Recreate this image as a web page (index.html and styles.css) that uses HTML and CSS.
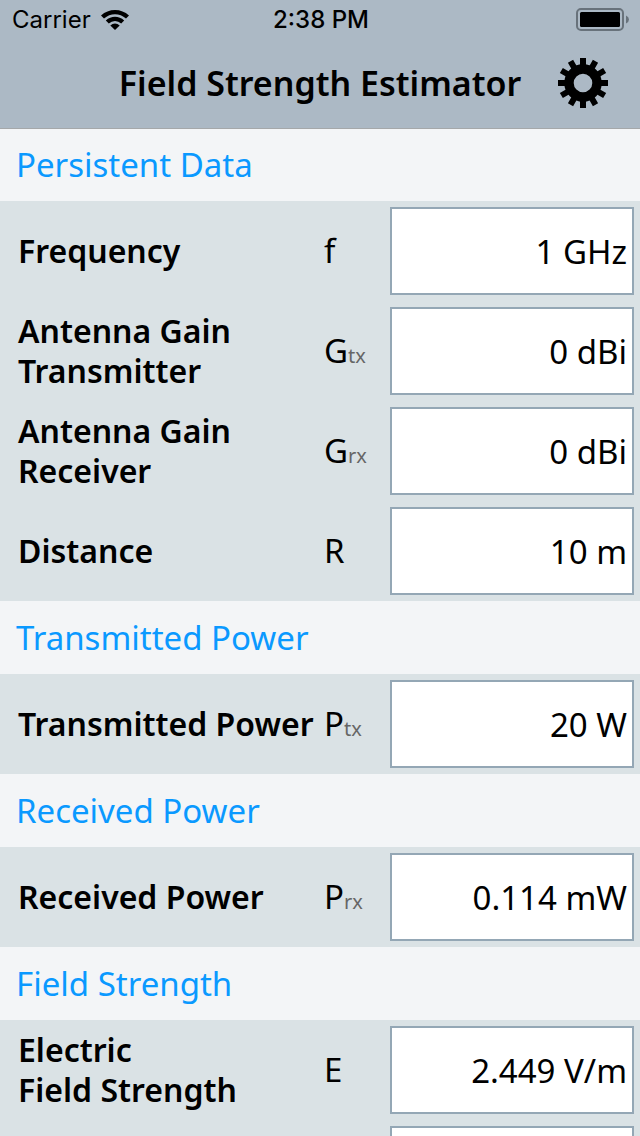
FILE: index.html
```html
<!DOCTYPE html>
<html lang="en">
<head>
<meta charset="utf-8">
<meta name="viewport" content="width=device-width, initial-scale=1">
<title>Field Strength Estimator</title>
<link rel="stylesheet" href="styles.css">
</head>
<body>
<div class="app">
  <header class="header">
    <div class="status">
      <div class="carrier">
        <span>Carrier</span>
        <svg class="wifi" viewBox="0 0 28 20" aria-hidden="true">
          <path d="M0 5.500Q6 0 14 0T28 5.500L25 8.600Q20 4.200 14 4.200T3 8.600Z"/>
          <path d="M4.800 10.500Q9 6.800 14 6.800T23.200 10.500L20.200 13.500Q17.500 11 14 11T7.800 13.500Z"/>
          <path d="M14 20L9.300 15.500Q11.500 13.600 14 13.600T18.700 15.500Z"/>
        </svg>
      </div>
      <span class="time">2:38 PM</span>
      <svg class="battery" viewBox="0 0 54 24" aria-hidden="true">
        <rect x="1" y="1" width="46" height="21" rx="4" fill="none" stroke="#68727b" stroke-width="2"/>
        <rect x="4" y="4" width="40" height="15" rx="1.5"/>
        <path d="M50 7.500Q53 9 53 11.500T50 15.500Z" fill="#68727b"/>
      </svg>
    </div>
    <div class="bar">
      <h1 class="title">Field Strength Estimator</h1>
      <button class="settings" type="button" aria-label="Settings">
        <svg class="gear" viewBox="-25 -25 50 50" aria-hidden="true">
          <circle r="14" fill="none" stroke="#000" stroke-width="9.400"/>
          <g stroke="#000" stroke-width="6">
            <path d="M0-25V-15M0 15V25M-25 0H-15M15 0H25"/>
            <path d="M0-25V-15M0 15V25M-25 0H-15M15 0H25" transform="rotate(30)"/>
            <path d="M0-25V-15M0 15V25M-25 0H-15M15 0H25" transform="rotate(60)"/>
          </g>
        </svg>
      </button>
    </div>
  </header>
  <main>
    <section>
      <h2 class="heading">Persistent Data</h2>
      <div class="row"><label class="name" for="freq">Frequency</label><span class="symbol">f</span><input class="value" id="freq" type="text" value="1 GHz"></div>
      <div class="row"><label class="name" for="gtx">Antenna Gain<br>Transmitter</label><span class="symbol">G<span class="index">tx</span></span><input class="value" id="gtx" type="text" value="0 dBi"></div>
      <div class="row"><label class="name" for="grx">Antenna Gain<br>Receiver</label><span class="symbol">G<span class="index">rx</span></span><input class="value" id="grx" type="text" value="0 dBi"></div>
      <div class="row"><label class="name" for="dist">Distance</label><span class="symbol">R</span><input class="value" id="dist" type="text" value="10 m"></div>
    </section>
    <section>
      <h2 class="heading">Transmitted Power</h2>
      <div class="row"><label class="name" for="ptx">Transmitted Power</label><span class="symbol">P<span class="index">tx</span></span><input class="value" id="ptx" type="text" value="20 W"></div>
    </section>
    <section>
      <h2 class="heading">Received Power</h2>
      <div class="row"><label class="name" for="prx">Received Power</label><span class="symbol">P<span class="index">rx</span></span><input class="value" id="prx" type="text" value="0.114 mW"></div>
    </section>
    <section>
      <h2 class="heading">Field Strength</h2>
      <div class="row"><label class="name" for="efield">Electric<br>Field Strength</label><span class="symbol">E</span><input class="value" id="efield" type="text" value="2.449 V/m"></div>
      <div class="row"><span></span><span></span><input class="value" type="text" aria-label="Field strength"></div>
    </section>
  </main>
</div>
</body>
</html>
```
FILE: styles.css
```css
* { box-sizing: border-box; }

body {
  margin: 0;
  background: #dae2e5;
  color: #000;
  font-family: "Noto Sans", "Open Sans", sans-serif;
}

.app {
  height: 100vh;
  overflow: hidden;
}

.header {
  position: relative;
  height: 128px;
  background: #acb9c5;
  box-shadow: 0 1px 0 #a5a8aa;
}

.status {
  display: grid;
  grid-template-columns: 1fr auto 1fr;
  align-items: center;
  height: 40px;
  padding: 0 10px 0 12px;
  font-family: Inter, sans-serif;
  font-size: 24px;
  line-height: 40px;
}

.carrier {
  display: flex;
  align-items: center;
  gap: 10px;
}

.wifi {
  width: 28px;
  height: 20px;
}

.time { font-weight: 500; }

.battery {
  justify-self: end;
  width: 54px;
  height: 24px;
}

.bar {
  display: grid;
  grid-template-columns: 1fr auto 1fr;
  align-items: center;
  height: 86px;
  padding: 0 32px;
}

.title {
  grid-column: 2;
  margin: 0;
  font-size: 34px;
  font-weight: 600;
  line-height: 48px;
}

.settings {
  justify-self: end;
  width: 50px;
  height: 50px;
  padding: 0;
  border: 0;
  background: none;
}

.gear {
  display: block;
  width: 50px;
  height: 50px;
}

.heading {
  margin: 0;
  padding: 0 16px;
  background: #f3f5f7;
  color: #0a99ff;
  font-size: 33px;
  font-weight: 400;
  line-height: 73px;
}

.row {
  display: grid;
  grid-template-columns: 1fr 66px 244px;
  align-items: center;
  min-height: 100px;
  padding: 6px 6px 6px 18px;
  font-size: 33px;
  line-height: 40px;
}

.name {
  font-size: 32px;
  font-weight: 600;
  white-space: nowrap;
}

.index {
  color: #666;
  font-size: 20px;
  line-height: 1;
}

.value {
  width: 100%;
  height: 88px;
  padding: 0 5px;
  border: 2px solid #94a7b5;
  border-radius: 0;
  background: #fff;
  color: #000;
  font: inherit;
  text-align: right;
}
```
